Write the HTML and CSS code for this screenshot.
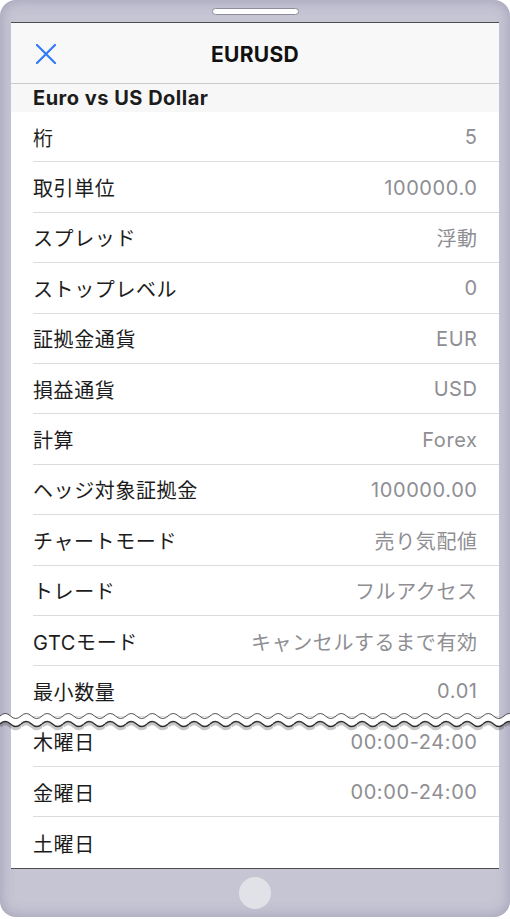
FILE: index.html
```html
<!DOCTYPE html>
<html lang="ja">
<head>
  <meta charset="UTF-8">
  <meta name="viewport" content="width=device-width, initial-scale=1.0">
  <title>EURUSD</title>
  <link rel="stylesheet" href="styles.css">
</head>
<body>
  <div class="phone">
    <div class="bezel-top">
      <div class="speaker"></div>
    </div>

    <div class="screen">
      <div class="nav-bar">
        <svg class="close-icon" width="20" height="20" viewBox="0 0 20 20">
          <path d="M1 1 L19 19 M19 1 L1 19" stroke="#2f7bf5" stroke-width="2.2" stroke-linecap="round" fill="none"/>
        </svg>
        <div class="nav-title">EURUSD</div>
      </div>

      <div class="section-header">Euro vs US Dollar</div>

      <ul class="spec-list">
        <li><span class="label">桁</span><span class="value">5</span></li>
        <li><span class="label">取引単位</span><span class="value">100000.0</span></li>
        <li><span class="label">スプレッド</span><span class="value">浮動</span></li>
        <li><span class="label">ストップレベル</span><span class="value">0</span></li>
        <li><span class="label">証拠金通貨</span><span class="value">EUR</span></li>
        <li><span class="label">損益通貨</span><span class="value">USD</span></li>
        <li><span class="label">計算</span><span class="value">Forex</span></li>
        <li><span class="label">ヘッジ対象証拠金</span><span class="value">100000.00</span></li>
        <li><span class="label">チャートモード</span><span class="value">売り気配値</span></li>
        <li><span class="label">トレード</span><span class="value">フルアクセス</span></li>
        <li><span class="label">GTCモード</span><span class="value">キャンセルするまで有効</span></li>
        <li><span class="label">最小数量</span><span class="value">0.01</span></li>
        <li><span class="label">木曜日</span><span class="value">00:00-24:00</span></li>
        <li><span class="label">金曜日</span><span class="value">00:00-24:00</span></li>
        <li><span class="label">土曜日</span><span class="value"></span></li>
      </ul>
    </div>

    <div class="bezel-bottom">
      <div class="home-button"></div>
    </div>

    <!-- torn edge between the two parts of the list -->
    <svg class="tear" width="510" height="26">
      <defs>
        <pattern id="tearTile" width="21" height="26" patternUnits="userSpaceOnUse">
          <path d="M0,8 Q5.25,3 10.5,8 T21,8 L21,16 Q15.75,21 10.5,16 T0,16 Z" fill="#ffffff"/>
          <path d="M0,18 Q5.25,13 10.5,18 T21,18" stroke="rgba(0,0,0,0.22)" stroke-width="3.5" fill="none"/>
          <path d="M0,8 Q5.25,3 10.5,8 T21,8" stroke="#3a3a3a" stroke-width="0.9" fill="none"/>
          <path d="M0,16 Q5.25,11 10.5,16 T21,16" stroke="#2e2e2e" stroke-width="1.4" fill="none"/>
        </pattern>
      </defs>
      <rect x="0" y="0" width="510" height="26" fill="url(#tearTile)"/>
    </svg>
  </div>
</body>
</html>
```

FILE: styles.css
```css
/* Page */
body {
  margin: 0;
  padding: 0;
  background: #ffffff;
  font-family: Inter, "Noto Sans CJK JP", sans-serif;
}

/* Phone frame */
.phone {
  position: relative;
  width: 510px;
  height: 917px;
  display: flex;
  flex-direction: column;
  align-items: center;
  background: #c6c5d4;
  border-radius: 16px;
  box-shadow: inset 0 0 14px rgba(110, 108, 140, 0.45);
  box-sizing: border-box;
}

.bezel-top {
  height: 22px;
  width: 100%;
  display: flex;
  justify-content: center;
  padding-top: 8px;
  box-sizing: border-box;
}

.speaker {
  width: 87px;
  height: 7px;
  background: #ffffff;
  border: 1px solid #8d8c99;
  border-radius: 4px;
  box-sizing: border-box;
}

.bezel-bottom {
  flex: 1;
  display: flex;
  align-items: center;
  justify-content: center;
}

.home-button {
  width: 32px;
  height: 32px;
  border-radius: 50%;
  background: #e1e1e8;
}

/* Screen */
.screen {
  width: 488px;
  background: #ffffff;
  border-top: 1px solid #4d4d4d;
  border-bottom: 1px solid #4d4d4d;
}

.nav-bar {
  position: relative;
  height: 61px;
  padding-top: 3px;
  display: flex;
  align-items: center;
  justify-content: center;
  background: #f8f8f8;
  border-bottom: 1px solid #c9c9c9;
  box-sizing: border-box;
}

.close-icon {
  position: absolute;
  left: 25px;
  top: 21px;
}

.nav-title {
  font-size: 21px;
  font-weight: 700;
  letter-spacing: 0.3px;
  color: #111;
}

.section-header {
  height: 28px;
  line-height: 29px;
  padding-left: 22px;
  background: #f7f7f7;
  font-size: 20px;
  font-weight: 700;
  letter-spacing: 0.5px;
  color: #1c1c1c;
}

/* Spec rows */
.spec-list {
  list-style: none;
  margin: 0;
  padding: 0;
}

.spec-list li {
  height: 50.4px;
  margin-left: 22px;
  padding-right: 22px;
  padding-top: 1px;
  display: flex;
  align-items: center;
  justify-content: space-between;
  border-bottom: 1px solid #dcdcdc;
  box-sizing: border-box;
  font-size: 20px;
  letter-spacing: 0.6px;
}

.spec-list li:last-child {
  border-bottom: none;
}

.label {
  color: #1c1c1c;
}

.value {
  color: #8e8e93;
  margin-right: -0.6px;
}

/* Torn edge */
.tear {
  position: absolute;
  left: 0;
  top: 708px;
}
```
